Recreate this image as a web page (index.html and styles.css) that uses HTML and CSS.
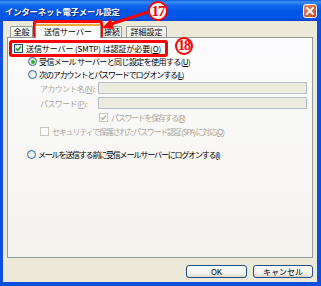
FILE: index.html
```html
<!DOCTYPE html>
<html lang="ja">
<head>
    <meta charset="UTF-8">
    <title>インターネット電子メール設定</title>
    <link rel="stylesheet" href="styles.css">
</head>
<body>
<div class="screen">
    <div class="window">
        <div class="titlebar">
            <span class="title">インターネット電子メール設定</span>
            <span class="close">
                <svg width="14" height="14" viewBox="0 0 14 14">
                    <defs>
                        <linearGradient id="cg" x1="0" y1="0" x2="1" y2="1">
                            <stop offset="0" stop-color="#f0906c"/>
                            <stop offset="1" stop-color="#c2421c"/>
                        </linearGradient>
                    </defs>
                    <rect x="0.5" y="0.5" width="13" height="13" rx="2" fill="url(#cg)" stroke="#fff"/>
                    <path d="M4 4 L10 10 M10 4 L4 10" stroke="#fff" stroke-width="1.8" stroke-linecap="square"/>
                </svg>
            </span>
        </div>

        <div class="tabs">
            <div class="tab t1">全般</div>
            <div class="tab t2 active">送信サーバー</div>
            <div class="tab t3">接続</div>
            <div class="tab t4">詳細設定</div>
        </div>

        <div class="panel">
            <div class="row r-auth">
                <span class="check on"><svg width="7" height="7" viewBox="0 0 7 7"><path d="M1 3.5 L2.8 5.3 L6 1.5" fill="none" stroke="#21a121" stroke-width="1.5"/></svg></span>
                <span>送信サーバー (SMTP) は認証が必要(<u>O</u>)</span>
            </div>
            <div class="row r-radio">
                <span class="radio on"></span>
                <span>受信メール サーバーと同じ設定を使用する(<u>U</u>)</span>
            </div>
            <div class="row r-radio r-logon">
                <span class="radio"></span>
                <span>次のアカウントとパスワードでログオンする(<u>L</u>)</span>
            </div>
            <div class="row r-field off">
                <span class="label">アカウント名(<u>N</u>):</span>
                <span class="field"></span>
            </div>
            <div class="row r-field off">
                <span class="label">パスワード(<u>P</u>):</span>
                <span class="field"></span>
            </div>
            <div class="row r-save off">
                <span class="check dis"><svg width="7" height="7" viewBox="0 0 7 7"><path d="M1 3.5 L2.8 5.3 L6 1.5" fill="none" stroke="#b8b6a8" stroke-width="1.5"/></svg></span>
                <span>パスワードを保存する(<u>R</u>)</span>
            </div>
            <div class="row r-spa off">
                <span class="check dis"></span>
                <span>セキュリティで保護されたパスワード認証 (SPA) に対応(<u>Q</u>)</span>
            </div>
            <div class="row r-radio r-last">
                <span class="radio"></span>
                <span>メールを送信する前に受信メール サーバーにログオンする(<u>I</u>)</span>
            </div>
        </div>

        <div class="buttons">
            <button class="btn">OK</button>
            <button class="btn">キャンセル</button>
        </div>
    </div>

    <!-- annotations drawn over the dialog -->
    <div class="mark box-tab"></div>
    <div class="mark box-auth"></div>
    <div class="num n17">17</div>
    <div class="num n18">18</div>
    <svg class="arrow" width="60" height="24" viewBox="0 0 60 24">
        <path d="M48 1 L8 14" stroke="#f00" stroke-width="3"/>
        <path d="M2 17 L11 8 L14 18 Z" fill="#f00"/>
    </svg>
</div>
</body>
</html>
```

FILE: styles.css
```css
body { margin: 0; font-family: "Noto Sans CJK JP", "Liberation Sans", sans-serif; font-size: 8px; }
.screen { position: relative; width: 321px; height: 286px; overflow: hidden; }

.window { height: 286px; box-sizing: border-box; background: #ece9d8; border: 0 solid #0b4fdc; border-width: 0 4px 4px 3px; display: flex; flex-direction: column; }

.titlebar { height: 21px; flex: none; display: flex; align-items: center; margin: 0 -4px 0 -3px; padding: 0 4px 0 5px;
    background: linear-gradient(to bottom, #0b5ed8 0%, #3c8ff8 10%, #1169ee 25%, #0055e5 55%, #0058ec 85%, #0342c8 100%); }
.title { color: #fff; font-weight: bold; font-size: 8.3px; letter-spacing: -0.1px; text-shadow: 1px 1px 0 #0a2a8a; }
.close { margin-left: auto; display: flex; }

.tabs { display: flex; align-items: flex-end; height: 16px; padding-left: 7px; flex: none; }
.tab { height: 11px; box-sizing: border-box; border: 1px solid #919b9c; border-bottom: none; border-radius: 2px 2px 0 0;
    background: linear-gradient(#ffffff, #ecebe6); display: flex; align-items: center; justify-content: center; line-height: 1; }
.t1 { width: 23px; margin-right: 2px; }
.t2 { width: 66px; margin-right: 1px; }
.t3 { width: 20px; margin-right: 4px; }
.t4 { width: 41px; }
.tab.active { height: 14px; margin-bottom: -1px; position: relative; z-index: 1; background: #fcfcfe; border-top: 2px solid #f2a93b; }

.panel { height: 221px; box-sizing: border-box; margin: 0 4px; border: 1px solid #919b9c; padding-top: 3px; flex: none;
    background: linear-gradient(#fcfcfe, #f4f3ee); }

.row { display: flex; align-items: center; height: 14px; white-space: nowrap; color: #000; letter-spacing: -0.6px; }
.off { color: #aca899; }
.r-auth { padding-left: 6px; letter-spacing: -0.1px; }
.r-auth .check { margin-right: 3px; }
.r-radio { height: 13px; padding-left: 20px; }
.r-radio .radio { margin-right: 2px; }
.r-logon { letter-spacing: -1.1px; }
.r-field { padding-left: 32px; }
.r-field + .r-field { margin-top: 1px; }
.r-field .label { width: 58px; }
.field { width: 209px; height: 12px; box-sizing: border-box; border: 1px solid #b9c2cc; background: #ecebe0; }
.r-save { padding-left: 91px; letter-spacing: -1.3px; }
.r-save .check { margin-right: 3px; }
.r-spa { padding-left: 32px; letter-spacing: -1.2px; }
.r-spa .check { margin-right: 3px; }
.r-last { height: 14px; margin-top: 9px; padding-left: 19px; letter-spacing: -1.2px; }

.check { width: 9px; height: 9px; box-sizing: border-box; border: 1px solid #1c5180; background: linear-gradient(135deg, #dcdcd7, #ffffff);
    display: inline-flex; align-items: center; justify-content: center; flex: none; }
.check.dis { border-color: #cac8bb; background: #fdfdfb; }
.radio { width: 9px; height: 9px; box-sizing: border-box; border: 1px solid #2d65a8; border-radius: 50%; background: linear-gradient(135deg, #dcdcd7, #ffffff);
    display: inline-flex; align-items: center; justify-content: center; flex: none; }
.radio.on::after { content: ""; width: 4px; height: 4px; border-radius: 50%; background: #2fb12f; }

.buttons { display: flex; justify-content: flex-end; gap: 6px; padding: 7px 4px 0 0; }
.btn { width: 61px; height: 13px; padding: 0; border: 1px solid #1f4f86; border-radius: 3px; font: inherit; font-size: 8px; color: #000;
    background: linear-gradient(#ffffff, #f1f0ea 70%, #d9d6c8); line-height: 1; }
.btn + .btn { width: 60px; }

.mark { position: absolute; box-sizing: border-box; border: 3px solid #f00; border-radius: 3px; }
.box-tab { left: 33px; top: 20px; width: 70px; height: 18px; }
.box-auth { left: 9px; top: 40px; width: 159px; height: 17px; }

.num { position: absolute; box-sizing: border-box; border: 2px solid #f00; border-radius: 50%; background: #fff; color: #f00;
    font-family: "Liberation Serif", serif; font-weight: bold; display: flex; align-items: center; justify-content: center; letter-spacing: -1px; }
.n17 { left: 148px; top: 1px; width: 20px; height: 20px; font-size: 15px; }
.n18 { left: 175px; top: 37px; width: 18px; height: 18px; font-size: 14px; }

.arrow { position: absolute; left: 100px; top: 11px; }
```
